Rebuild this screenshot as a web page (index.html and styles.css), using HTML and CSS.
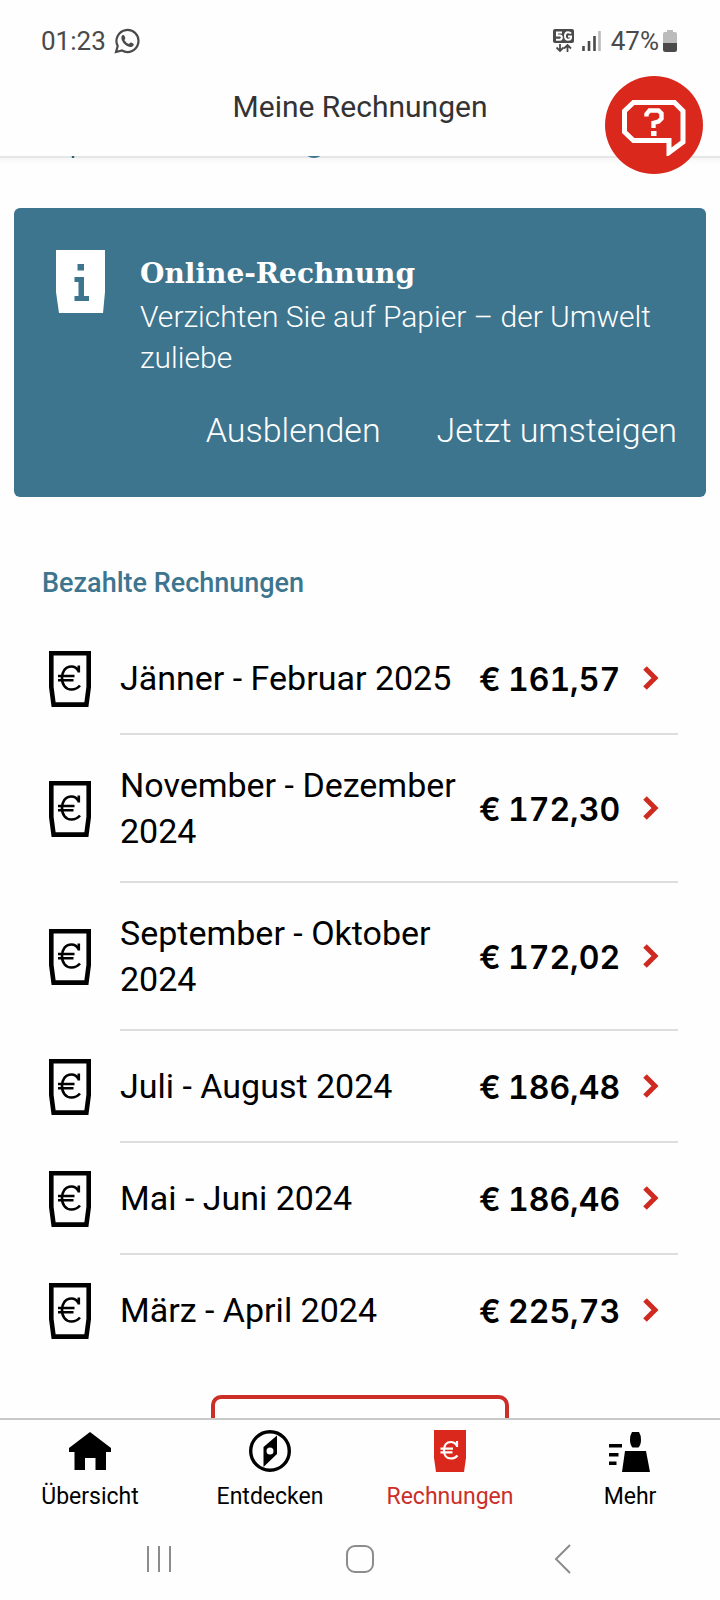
FILE: index.html
```html
<!DOCTYPE html>
<html lang="de">
<head>
<meta charset="utf-8">
<meta name="viewport" content="width=device-width, initial-scale=1">
<title>Meine Rechnungen</title>
<link rel="stylesheet" href="styles.css">
</head>
<body>
<svg class="defs" aria-hidden="true">
  <symbol id="bill" viewBox="0 0 42 56">
    <path d="M2.300 2.300H39.700V36L37.400 53.600H4.600L2.300 36Z" fill="none" stroke="currentColor" stroke-width="4.600"/>
    <path d="M29.800 14.500V21.500M29.500 20Q27 15.500 22.500 15.500C16 15.500 13 21 13 27C13 33.500 16.500 38.500 22.500 38.500Q27.500 38.500 31 34.500M9 25H25.500M9 29.200H24.500" fill="none" stroke="currentColor" stroke-width="2.600"/>
  </symbol>
  <symbol id="chevron" viewBox="0 0 16 24">
    <path d="M2 2L12 12L2 22" fill="none" stroke="currentColor" stroke-width="5"/>
  </symbol>
</svg>
<div class="app">
  <div class="status">
    <div class="status-group">
      <span>01:23</span>
      <svg class="wa" viewBox="0 0 26 26" aria-hidden="true">
        <path d="M2 24L3.700 18A11 11 0 1 1 8 22.500Z" fill="none" stroke="currentColor" stroke-width="2.200"/>
        <path d="M7.500 8.500C8.500 6.500 10 6.800 10.500 8L11.300 10Q11.500 11 10.300 12Q12 15 15 16Q16.300 14.300 17.200 14.600L19.500 15.800C20.500 17.500 18 19.300 16 19C11.500 18.300 6.500 13 7.500 8.500Z" fill="currentColor"/>
      </svg>
    </div>
    <div class="status-group status-right">
      <svg class="net" viewBox="0 0 21 24" aria-hidden="true">
        <rect x="0" y="0" width="21" height="14" rx="2" fill="currentColor"/>
        <path d="M9 3.500H4V6.500H7Q8.800 6.500 8.800 8.500T7 10.700H3M18 4.500Q17 3.200 15 3.200Q12 3.200 12 7T15 10.800Q17.500 10.800 18 9V7.500H15" fill="none" stroke="#fff" stroke-width="2"/>
        <path d="M7 15V22M3.500 18.500L7 22L10.500 18.500M14.500 23V16M11 19.500L14.500 16L18 19.500" fill="none" stroke="currentColor" stroke-width="1.800"/>
      </svg>
      <svg class="signal" viewBox="0 0 19 20" aria-hidden="true">
        <path d="M1.500 15V20M7 10V20M12.500 5V20" stroke="currentColor" stroke-width="2.600"/><path d="M17.500 0V20" stroke="#bbb" stroke-width="2.600"/>
      </svg>
      <span class="percent">47%</span>
      <svg class="battery" viewBox="0 0 14 22" aria-hidden="true">
        <path d="M4 0H10V2H12Q14 2 14 4V13H0V4Q0 2 2 2H4Z" fill="#bbb"/><path d="M0 13H14V19.500Q14 22 11.500 22H2.500Q0 22 0 19.500Z" fill="currentColor"/>
      </svg>
    </div>
  </div>
  <header class="header">
    <h1>Meine Rechnungen</h1>
    <button class="help" type="button" aria-label="Hilfe">
      <svg viewBox="0 0 64 56" aria-hidden="true">
        <path d="M11.500 2.500H52.500L61 11V42L47 52.500V40.500H11.500L2.500 32V11Z" fill="none" stroke="currentColor" stroke-width="5"/>
        <path d="M24.500 16.500V14L27.500 10.500H36.500L39.500 13.500V18.500L36.500 21.500L31.500 23V28" fill="none" stroke="currentColor" stroke-width="4.400"/>
        <path d="M29 31H34.500V36H29Z" fill="currentColor"/>
      </svg>
    </button>
  </header>
  <main class="content">
    <svg class="sliver" viewBox="0 0 300 3" aria-hidden="true">
      <path d="M29.800 0H32.200V2H29.800Z" fill="#2d5e75"/><path d="M266 -1Q272 2.500 278 -1" fill="none" stroke="#3d758e" stroke-width="2.400"/>
    </svg>
    <section class="card">
      <svg class="info" viewBox="0 0 49 63" aria-hidden="true">
        <path d="M0 0H49V42L47 63H3L0 42Z" fill="#fff"/>
        <path d="M21.500 14H28V20.500H21.500ZM18.500 27H28V46H33V51H18.500V46H22.500V32H18.500Z" fill="#3d758e"/>
      </svg>
      <div class="card-text">
        <h2>Online-Rechnung</h2>
        <p>Verzichten Sie auf Papier – der Umwelt zuliebe</p>
      </div>
      <div class="actions">
        <button type="button">Ausblenden</button>
        <button type="button">Jetzt umsteigen</button>
      </div>
    </section>
    <h2 class="section-title">Bezahlte Rechnungen</h2>
    <ul class="bills">
      <li><a href="#"><svg class="bill" aria-hidden="true"><use href="#bill"/></svg><span class="row"><span class="period">Jänner - Februar 2025</span><b><i>€</i>161,57</b><svg class="chevron" aria-hidden="true"><use href="#chevron"/></svg></span></a></li>
      <li><a href="#"><svg class="bill" aria-hidden="true"><use href="#bill"/></svg><span class="row"><span class="period">November - Dezember 2024</span><b><i>€</i>172,30</b><svg class="chevron" aria-hidden="true"><use href="#chevron"/></svg></span></a></li>
      <li><a href="#"><svg class="bill" aria-hidden="true"><use href="#bill"/></svg><span class="row"><span class="period">September - Oktober 2024</span><b><i>€</i>172,02</b><svg class="chevron" aria-hidden="true"><use href="#chevron"/></svg></span></a></li>
      <li><a href="#"><svg class="bill" aria-hidden="true"><use href="#bill"/></svg><span class="row"><span class="period">Juli - August 2024</span><b><i>€</i>186,48</b><svg class="chevron" aria-hidden="true"><use href="#chevron"/></svg></span></a></li>
      <li><a href="#"><svg class="bill" aria-hidden="true"><use href="#bill"/></svg><span class="row"><span class="period">Mai - Juni 2024</span><b><i>€</i>186,46</b><svg class="chevron" aria-hidden="true"><use href="#chevron"/></svg></span></a></li>
      <li><a href="#"><svg class="bill" aria-hidden="true"><use href="#bill"/></svg><span class="row"><span class="period">März - April 2024</span><b><i>€</i>225,73</b><svg class="chevron" aria-hidden="true"><use href="#chevron"/></svg></span></a></li>
    </ul>
    <button class="more" type="button"></button>
  </main>
  <nav class="tabs">
    <a href="#"><svg viewBox="0 0 42 42" aria-hidden="true"><path d="M21 2L42 18V22H37V40H26.500V28H16V40H5.500V22H0V18Z" fill="currentColor"/></svg>Übersicht</a>
    <a href="#"><svg viewBox="0 0 42 42" aria-hidden="true"><circle cx="21" cy="21" r="19.300" fill="none" stroke="currentColor" stroke-width="3.400"/><path d="M28 5.500V24L14.500 37V17ZM21 17.500A3.500 3.500 0 1 0 21 24.500A3.500 3.500 0 1 0 21 17.500Z" fill="currentColor" fill-rule="evenodd"/></svg>Entdecken</a>
    <a class="active" href="#" aria-current="page"><svg viewBox="0 0 42 42" aria-hidden="true"><path d="M5 0H37V28L35 42H7L5 28Z" fill="#da291c"/><path d="M28 11V17M28 15.500Q25.500 12 22 12C17 12 15 16 15 20.500C15 25 17.500 28.500 22 28.500Q26 28.500 28.500 25.500M11.500 18.700H24M11.500 22.300H23.500" fill="none" stroke="#fff" stroke-width="2.200"/></svg>Rechnungen</a>
    <a href="#"><svg viewBox="0 0 42 42" aria-hidden="true"><path d="M23 2H30Q32 5 32 10Q32 15 29.500 17.500H23.500Q21 15 21 10Q21 5 23 2ZM16 21H37L41 42H13ZM0 14H13V17.500H0ZM0 23H9.500V26.500H0ZM0 31.500H7.500V35H0Z" fill="currentColor"/></svg>Mehr</a>
  </nav>
  <div class="system">
    <button type="button" aria-label="Letzte Apps"><svg viewBox="0 0 28 28" aria-hidden="true"><path d="M3 1V27M14 1V27M25 1V27"/></svg></button>
    <button type="button" aria-label="Startseite"><svg viewBox="0 0 28 28" aria-hidden="true"><rect x="1" y="1" width="26" height="26" rx="8"/></svg></button>
    <button type="button" aria-label="Zurück"><svg viewBox="0 0 28 28" aria-hidden="true"><path d="M23 0L9 14L23 28"/></svg></button>
  </div>
</div>
</body>
</html>
```
FILE: styles.css
```css
* { box-sizing: border-box; }
body {
  margin: 0;
  background: #fefefe;
  color: #000;
  font-family: Roboto, sans-serif;
}
h1, h2, p, ul { margin: 0; padding: 0; }
button { border: 0; padding: 0; background: none; color: inherit; font: inherit; }
a { color: inherit; text-decoration: none; }
svg { display: block; flex: none; }
.defs { position: absolute; width: 0; height: 0; }

.app { height: 100vh; display: flex; flex-direction: column; }

.status {
  display: flex;
  justify-content: space-between;
  align-items: center;
  height: 82px;
  padding: 0 43px 0 41px;
  color: #4a4a4a;
  font: 26px/32px Roboto, sans-serif;
}
.status-group { display: flex; align-items: center; gap: 8px; }
.wa { width: 26px; height: 26px; }
.net { width: 21px; height: 24px; }
.signal { width: 19px; height: 20px; }
.percent { margin-left: 2px; }
.battery { width: 14px; height: 22px; margin-left: -4px; }

.header {
  position: relative;
  z-index: 1;
  display: flex;
  justify-content: center;
  height: 74px;
  flex: none;
  padding-top: 4px;
  color: #333;
}
.header h1 { font-size: 30px; font-weight: 400; line-height: 42px; }
.help {
  position: absolute;
  top: -6px;
  right: 17px;
  width: 98px;
  height: 98px;
  border-radius: 50%;
  background: #da291c;
  color: #fff;
  display: grid;
  place-items: center;
}
.help svg { width: 64px; height: 56px; margin-top: 6px; }

.content {
  flex: 1;
  min-height: 0;
  overflow: hidden;
  background: linear-gradient(#e4e6e7 0 2px, #f6f6f6 2px, #fefefe 8px);
}
.sliver { width: 300px; height: 3px; margin-left: 42px; }

.card {
  display: grid;
  grid-template-columns: 49px 1fr;
  column-gap: 35px;
  margin: 49px 14px 0;
  padding: 42px 29px 43px 42px;
  border-radius: 6px;
  background: #3d758e;
  color: #fff;
}
.info { width: 49px; height: 63px; }
.card-text { padding-top: 2px; }
.card h2 { font: bold 28px/44px "DejaVu Serif", serif; }
.card p { font-size: 30px; font-weight: 300; line-height: 41px; }
.actions {
  grid-column: 1 / -1;
  display: flex;
  justify-content: flex-end;
  gap: 56px;
  margin-top: 28px;
  font-size: 34px;
  font-weight: 300;
  line-height: 48px;
}

.section-title {
  margin: 70px 42px 0;
  color: #3d758e;
  font-size: 27px;
  font-weight: 500;
  line-height: 32px;
}

.bills { list-style: none; margin-top: 24px; padding: 0 42px 0 49px; }
.bills a { display: flex; align-items: center; gap: 29px; }
.bill { width: 42px; height: 56px; }
.row {
  flex: 1;
  display: flex;
  align-items: center;
  min-height: 112px;
  padding: 27px 19px 27px 0;
  border-bottom: 2px solid #dedede;
}
li:last-child .row { border-bottom-color: transparent; }
.period { flex: 1; font-size: 34px; line-height: 46px; }
.row b { width: 164px; padding-top: 4px; font: 600 32px/46px Inter, sans-serif; font-variant-numeric: tabular-nums; }
.row i { display: inline-block; width: 29px; font-style: normal; }
.chevron { width: 16px; height: 24px; color: #cf2a20; }

.more {
  display: block;
  width: 298px;
  height: 80px;
  margin: 28px auto 0;
  border: 4px solid #cb2f28;
  border-radius: 10px;
}

.tabs {
  display: grid;
  grid-template-columns: repeat(4, 1fr);
  border-top: 2px solid #c8cac9;
  padding-top: 10px;
  font-size: 23px;
  line-height: 32px;
}
.tabs a { display: flex; flex-direction: column; align-items: center; gap: 9px; }
.tabs svg { width: 42px; height: 42px; }
.active { color: #cb2f28; }

.system { display: flex; justify-content: space-around; padding: 32px 58px 27px; }
.system svg { width: 28px; height: 28px; fill: none; stroke: #8c8c8c; stroke-width: 2; overflow: visible; }
```
